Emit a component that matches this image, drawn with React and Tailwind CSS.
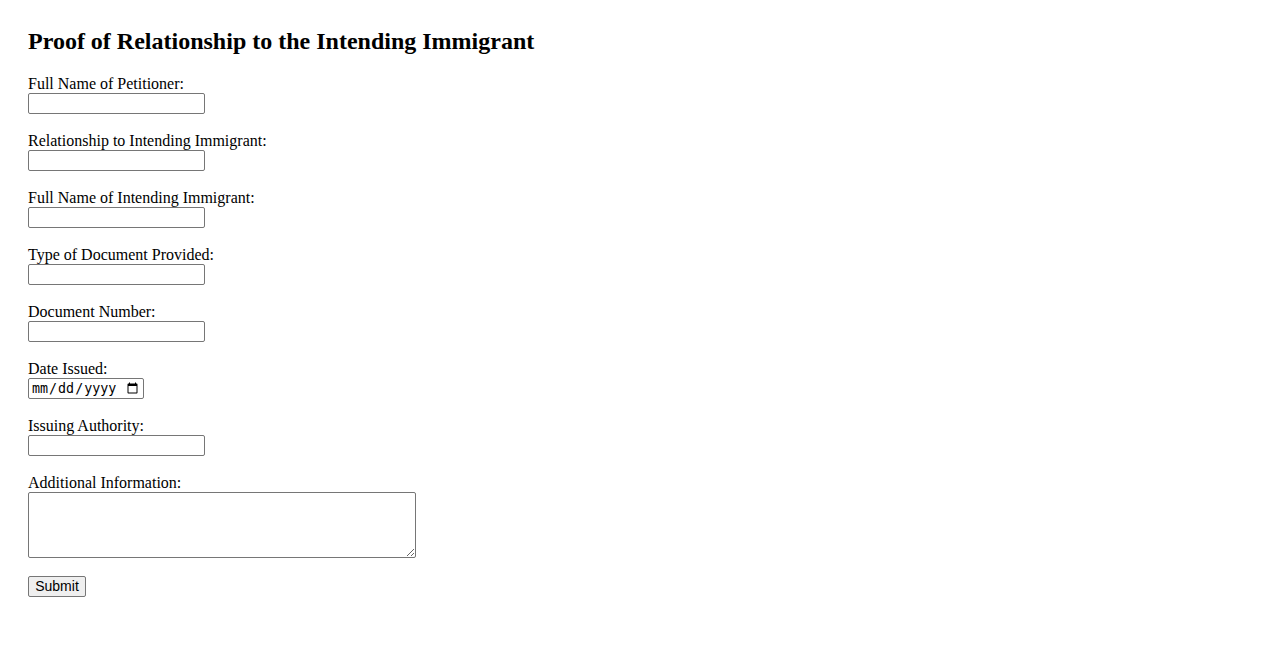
import React from "react";

const fields = [
  { id: "petitioner", label: "Full Name of Petitioner:" },
  { id: "relationship", label: "Relationship to Intending Immigrant:" },
  { id: "immigrant", label: "Full Name of Intending Immigrant:" },
  { id: "docType", label: "Type of Document Provided:" },
  { id: "docNumber", label: "Document Number:" },
  { id: "dateIssued", label: "Date Issued:", type: "date" },
  { id: "authority", label: "Issuing Authority:" },
];

const inputBase =
  "block h-[21px] border border-[#767676] rounded-[2px] bg-white px-[2px] text-[13.333px] text-black outline-none";

export default function App() {
  return (
    <div className="min-h-screen bg-white text-black pt-[28px] pl-[28px] font-['Liberation_Serif','Times_New_Roman',serif]">
      <h2 className="text-[24px] font-bold leading-[27px] mb-[20px]">
        Proof of Relationship to the Intending Immigrant
      </h2>

      <form className="flex flex-col items-start">
        {fields.map((f) => (
          <div key={f.id} className="mb-[18px]">
            <label htmlFor={f.id} className="block text-[16px] leading-[18px]">
              {f.label}
            </label>
            {f.type === "date" ? (
              <input
                id={f.id}
                type="date"
                className={inputBase + " w-[116px] font-['DejaVu_Sans_Mono',monospace] text-[12px]"}
              />
            ) : (
              <input
                id={f.id}
                type="text"
                className={inputBase + " w-[177px] font-['Liberation_Sans',Arial,sans-serif]"}
              />
            )}
          </div>
        ))}

        <div className="mb-[18px]">
          <label htmlFor="info" className="block text-[16px] leading-[18px]">
            Additional Information:
          </label>
          <textarea
            id="info"
            className="block w-[388px] h-[66px] border border-[#767676] rounded-[2px] bg-white p-[2px] text-[13.333px] font-['Liberation_Mono',monospace] outline-none"
          />
        </div>

        <button
          type="submit"
          className="block w-[58px] h-[21px] border border-[#767676] rounded-[2px] bg-[#efefef] text-[14px] leading-[17px] text-center text-black font-['Liberation_Sans',Arial,sans-serif]"
        >
          Submit
        </button>
      </form>
    </div>
  );
}
